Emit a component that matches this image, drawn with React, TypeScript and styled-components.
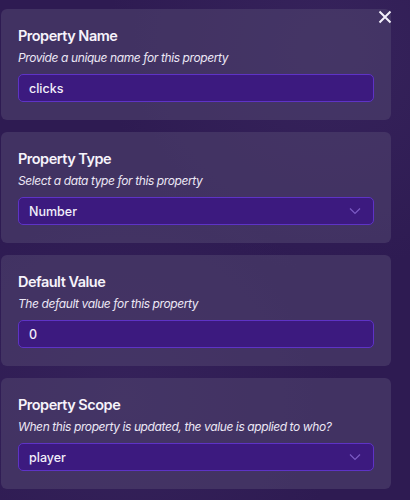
import styled, { createGlobalStyle } from 'styled-components';

const GlobalStyle = createGlobalStyle`
  html, body {
    margin: 0;
    padding: 0;
    background: #2e1b52;
  }
  body {
    font-family: Inter, "Noto Sans", sans-serif;
    color: #ffffff;
  }
`;

type Field = {
  title: string;
  hint: string;
  value: string;
  select?: boolean;
};

const fields: Field[] = [
  { title: 'Property Name', hint: 'Provide a unique name for this property', value: 'clicks' },
  { title: 'Property Type', hint: 'Select a data type for this property', value: 'Number', select: true },
  { title: 'Default Value', hint: 'The default value for this property', value: '0' },
  {
    title: 'Property Scope',
    hint: 'When this property is updated, the value is applied to who?',
    value: 'player',
    select: true,
  },
];

const Chevron = () => (
  <svg width="12" height="8" viewBox="0 0 12 8" fill="none">
    <path d="M1 1.5 L6 6.5 L11 1.5" stroke="#7b5bc4" strokeWidth="1.2" />
  </svg>
);

const CloseIcon = () => (
  <svg width="14" height="14" viewBox="0 0 14 14" fill="none">
    <path d="M1.5 1.5 L12.5 12.5 M12.5 1.5 L1.5 12.5" stroke="#f4f0fb" strokeWidth="2" />
  </svg>
);

const App: React.FC = () => {
  return (
    <>
      <GlobalStyle />
      <StyledPage>
        <button className="close" aria-label="close">
          <CloseIcon />
        </button>
        {fields.map((f) => (
          <Card key={f.title}>
            <Title>{f.title}</Title>
            <Hint>{f.hint}</Hint>
            <Input>
              <span>{f.value}</span>
              {f.select && <Chevron />}
            </Input>
          </Card>
        ))}
      </StyledPage>
    </>
  );
};
export default App;

const StyledPage = styled.div`
  position: relative;
  width: 410px;
  height: 500px;
  box-sizing: border-box;
  padding: 9px 19px 0 1px;
  display: flex;
  flex-direction: column;
  gap: 12px;
  overflow: hidden;
  background:
    radial-gradient(circle at 80% 10%, rgba(70, 50, 110, 0.35), transparent 40%),
    radial-gradient(circle at 30% 80%, rgba(70, 50, 110, 0.3), transparent 45%),
    #2e1b52;

  .close {
    position: absolute;
    top: 10px;
    right: 18px;
    padding: 0;
    border: none;
    background: none;
    display: flex;
    cursor: pointer;
  }
`;

const Card = styled.div`
  height: 111px;
  box-sizing: border-box;
  padding: 17px 17px 0 17px;
  border-radius: 6px;
  background: rgba(78, 64, 108, 0.62);
  display: flex;
  flex-direction: column;
`;

const Title = styled.div`
  font-size: 14.5px;
  font-weight: 600;
  line-height: 20px;
  letter-spacing: -0.5px;
  color: #f6f3fb;
`;

const Hint = styled.div`
  margin-top: 3px;
  font-size: 12px;
  font-style: italic;
  line-height: 17px;
  letter-spacing: -0.4px;
  color: #ece7f5;
`;

const Input = styled.div`
  margin-top: 8px;
  height: 28px;
  box-sizing: border-box;
  border: 1.5px solid #5e33c6;
  border-radius: 5px;
  background: #3c1a7f;
  display: flex;
  align-items: center;
  justify-content: space-between;
  padding: 0 12px 0 10px;
  font-size: 12.5px;
  font-weight: 500;
  color: #f2eefa;
`;
